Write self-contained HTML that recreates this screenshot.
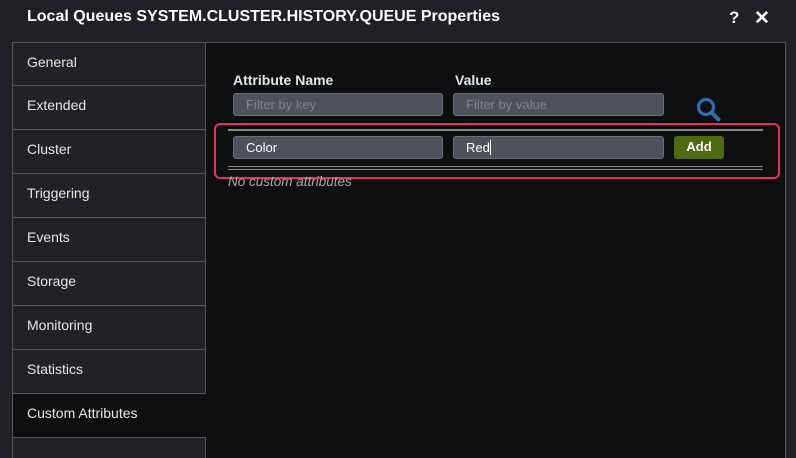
<!DOCTYPE html>
<html style="width:796px;height:458px;overflow:hidden"><head><style>
*{box-sizing:border-box;margin:0;padding:0}
body{width:796px;height:458px;background:#202126;font-family:"Liberation Sans",sans-serif;color:#e6e6e6;position:relative;overflow:hidden}
.title{position:absolute;left:27px;top:8px;font-size:16px;font-weight:bold;color:#fff}
.hq{position:absolute;left:729px;top:8px;font-size:17px;font-weight:bold;color:#fff}
.hx{position:absolute;left:754px;top:7px;font-size:19px;font-weight:bold;color:#fff}
.tabs{position:absolute;left:12px;top:42px;width:194px;height:416px;overflow:hidden}
.tab{position:absolute;left:0;width:194px;height:44px;border:1px solid #555;border-top:none;background:#212228;font-size:14px;padding:11px 0 0 14px;color:#e6e6e6}
.content{position:absolute;left:205px;top:42px;width:581px;height:416px;background:#0e0f11;border:1px solid #555;border-bottom:none}
.lbl{position:absolute;top:72px;font-size:14px;font-weight:bold;color:#e6e6e6}
.inp{position:absolute;height:23px;background:#4e525b;border:1px solid #6a6e77;border-radius:3px;font-size:13px;padding:3px 12px}
.ph{color:#7d818a}
.red{position:absolute;left:214px;top:123px;width:566px;height:56px;border:2.5px solid #e8305a;border-radius:6px}
.ln{position:absolute;left:228px;width:535px;height:2px;background:#8a8a8a}
.add{position:absolute;left:674px;top:136px;width:50px;height:23px;background:#4f6b12;border-radius:3px;font-size:13px;font-weight:bold;color:#fff;text-align:center;line-height:22px}
</style></head><body>
<div class="title">Local Queues SYSTEM.CLUSTER.HISTORY.QUEUE Properties</div>
<div class="hq">?</div><div class="hx">✕</div>
<div class="content"></div>
<div class="tabs">
<div class="tab" style="top:0;border-top:1px solid #555">General</div>
<div class="tab" style="top:44px">Extended</div>
<div class="tab" style="top:88px">Cluster</div>
<div class="tab" style="top:132px">Triggering</div>
<div class="tab" style="top:176px">Events</div>
<div class="tab" style="top:220px">Storage</div>
<div class="tab" style="top:264px">Monitoring</div>
<div class="tab" style="top:308px">Statistics</div>
<div class="tab" style="top:352px;background:#0e0f11;border-right:none;width:195px">Custom Attributes</div>
<div class="tab" style="top:396px;height:20px;border-bottom:none"></div>
</div>
<div class="lbl" style="left:233px">Attribute Name</div>
<div class="lbl" style="left:455px">Value</div>
<div class="inp ph" style="left:233px;top:93px;width:210px">Filter by key</div>
<div class="inp ph" style="left:453px;top:93px;width:211px">Filter by value</div>
<svg style="position:absolute;left:696px;top:97px" width="26" height="26" viewBox="0 0 26 26"><circle cx="10" cy="10" r="7.5" fill="none" stroke="#2f6fb0" stroke-width="3.2"/><line x1="15.5" y1="15.5" x2="22.5" y2="22.5" stroke="#2f6fb0" stroke-width="4" stroke-linecap="round"/></svg>
<div class="red"></div>
<div class="ln" style="top:129px"></div>
<div class="inp" style="left:233px;top:136px;width:210px;color:#fff">Color</div>
<div class="inp" style="left:453px;top:136px;width:211px;color:#fff">Red<span style="display:inline-block;width:1px;height:15px;background:#fff;vertical-align:-3px"></span></div>
<div class="add">Add</div>
<div class="ln" style="top:166px;height:1px"></div>
<div class="ln" style="top:169px;height:1px"></div>
<div style="position:absolute;left:228px;top:174px;font-size:13.5px;font-style:italic;color:#a8a8a8">No custom attributes</div>
</body></html>
